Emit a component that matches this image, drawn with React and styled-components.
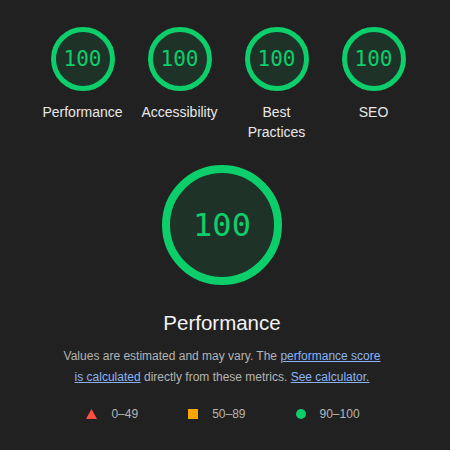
import styled, { createGlobalStyle } from "styled-components";

const GlobalStyle = createGlobalStyle`
  body {
    margin: 0;
    background: #212121;
    font-family: "Liberation Sans", Arial, sans-serif;
    color: #e8e8e8;
  }
`;

const Page = styled.div`
  width: 450px;
  height: 450px;
  overflow: hidden;
`;

const GaugeRow = styled.div`
  display: flex;
  align-items: flex-start;
  padding: 27px 0 0 34px;
`;

const GaugeWrapper = styled.div`
  width: 97px;
  display: flex;
  flex-direction: column;
  align-items: center;
`;

const Circle = styled.div`
  position: relative;
  width: ${(p) => p.size}px;
  height: ${(p) => p.size}px;
  flex-shrink: 0;

  svg {
    display: block;
  }
`;

const Percentage = styled.div`
  position: absolute;
  inset: 0;
  display: flex;
  align-items: center;
  justify-content: center;
  font-family: "DejaVu Sans Mono", "Liberation Mono", monospace;
  font-size: ${(p) => p.fontSize}px;
  color: #0cce6b;
`;

const GaugeLabel = styled.div`
  margin-top: 11px;
  padding: 0 8px;
  font-size: 14px;
  line-height: 20px;
  text-align: center;
  color: #e8e8e8;
`;

const Summary = styled.div`
  display: flex;
  flex-direction: column;
  align-items: center;
  padding-right: 6px;
  margin-top: 23px;
`;

const Title = styled.div`
  margin-top: 24px;
  font-size: 20.5px;
  line-height: 28px;
  color: #f3f3f3;
`;

const Description = styled.p`
  margin: 9px 0 0;
  width: 320px;
  font-size: 12px;
  line-height: 21px;
  text-align: center;
  color: #b4b4b4;
`;

const Link = styled.a`
  color: #8ab4f8;
  text-decoration: underline;
`;

const Legend = styled.div`
  display: flex;
  align-items: center;
  gap: 50px;
  margin-top: 16px;
  padding-left: 2px;
`;

const LegendItem = styled.div`
  display: flex;
  align-items: center;
  gap: 14px;
  font-size: 12px;
  line-height: 20px;
  color: #b4b4b4;
`;

const Gauge = ({ size, stroke, fontSize }) => {
  const r = (size - stroke) / 2;
  return (
    <Circle size={size}>
      <svg width={size} height={size} viewBox={`0 0 ${size} ${size}`}>
        <circle
          cx={size / 2}
          cy={size / 2}
          r={r}
          fill="rgba(12, 206, 107, 0.1)"
          stroke="#0cce6b"
          strokeWidth={stroke}
        />
      </svg>
      <Percentage fontSize={fontSize}>100</Percentage>
    </Circle>
  );
};

const categories = ["Performance", "Accessibility", "Best Practices", "SEO"];

const App = () => {
  return (
    <Page>
      <GlobalStyle />
      <GaugeRow>
        {categories.map((name) => (
          <GaugeWrapper key={name}>
            <Gauge size={64} stroke={5} fontSize={21} />
            <GaugeLabel>{name}</GaugeLabel>
          </GaugeWrapper>
        ))}
      </GaugeRow>

      <Summary>
        <Gauge size={120} stroke={8} fontSize={32} />
        <Title>Performance</Title>
        <Description>
          Values are estimated and may vary. The{" "}
          <Link href="#">performance score is calculated</Link> directly from
          these metrics. <Link href="#">See calculator.</Link>
        </Description>
        <Legend>
          <LegendItem>
            <svg width="11" height="10" viewBox="0 0 11 10">
              <polygon points="5.5,0 11,10 0,10" fill="#ff4e42" />
            </svg>
            0–49
          </LegendItem>
          <LegendItem>
            <svg width="10" height="10" viewBox="0 0 10 10">
              <rect width="10" height="10" fill="#ffa400" />
            </svg>
            50–89
          </LegendItem>
          <LegendItem>
            <svg width="10" height="10" viewBox="0 0 10 10">
              <circle cx="5" cy="5" r="5" fill="#0cce6b" />
            </svg>
            90–100
          </LegendItem>
        </Legend>
      </Summary>
    </Page>
  );
};

export default App;
